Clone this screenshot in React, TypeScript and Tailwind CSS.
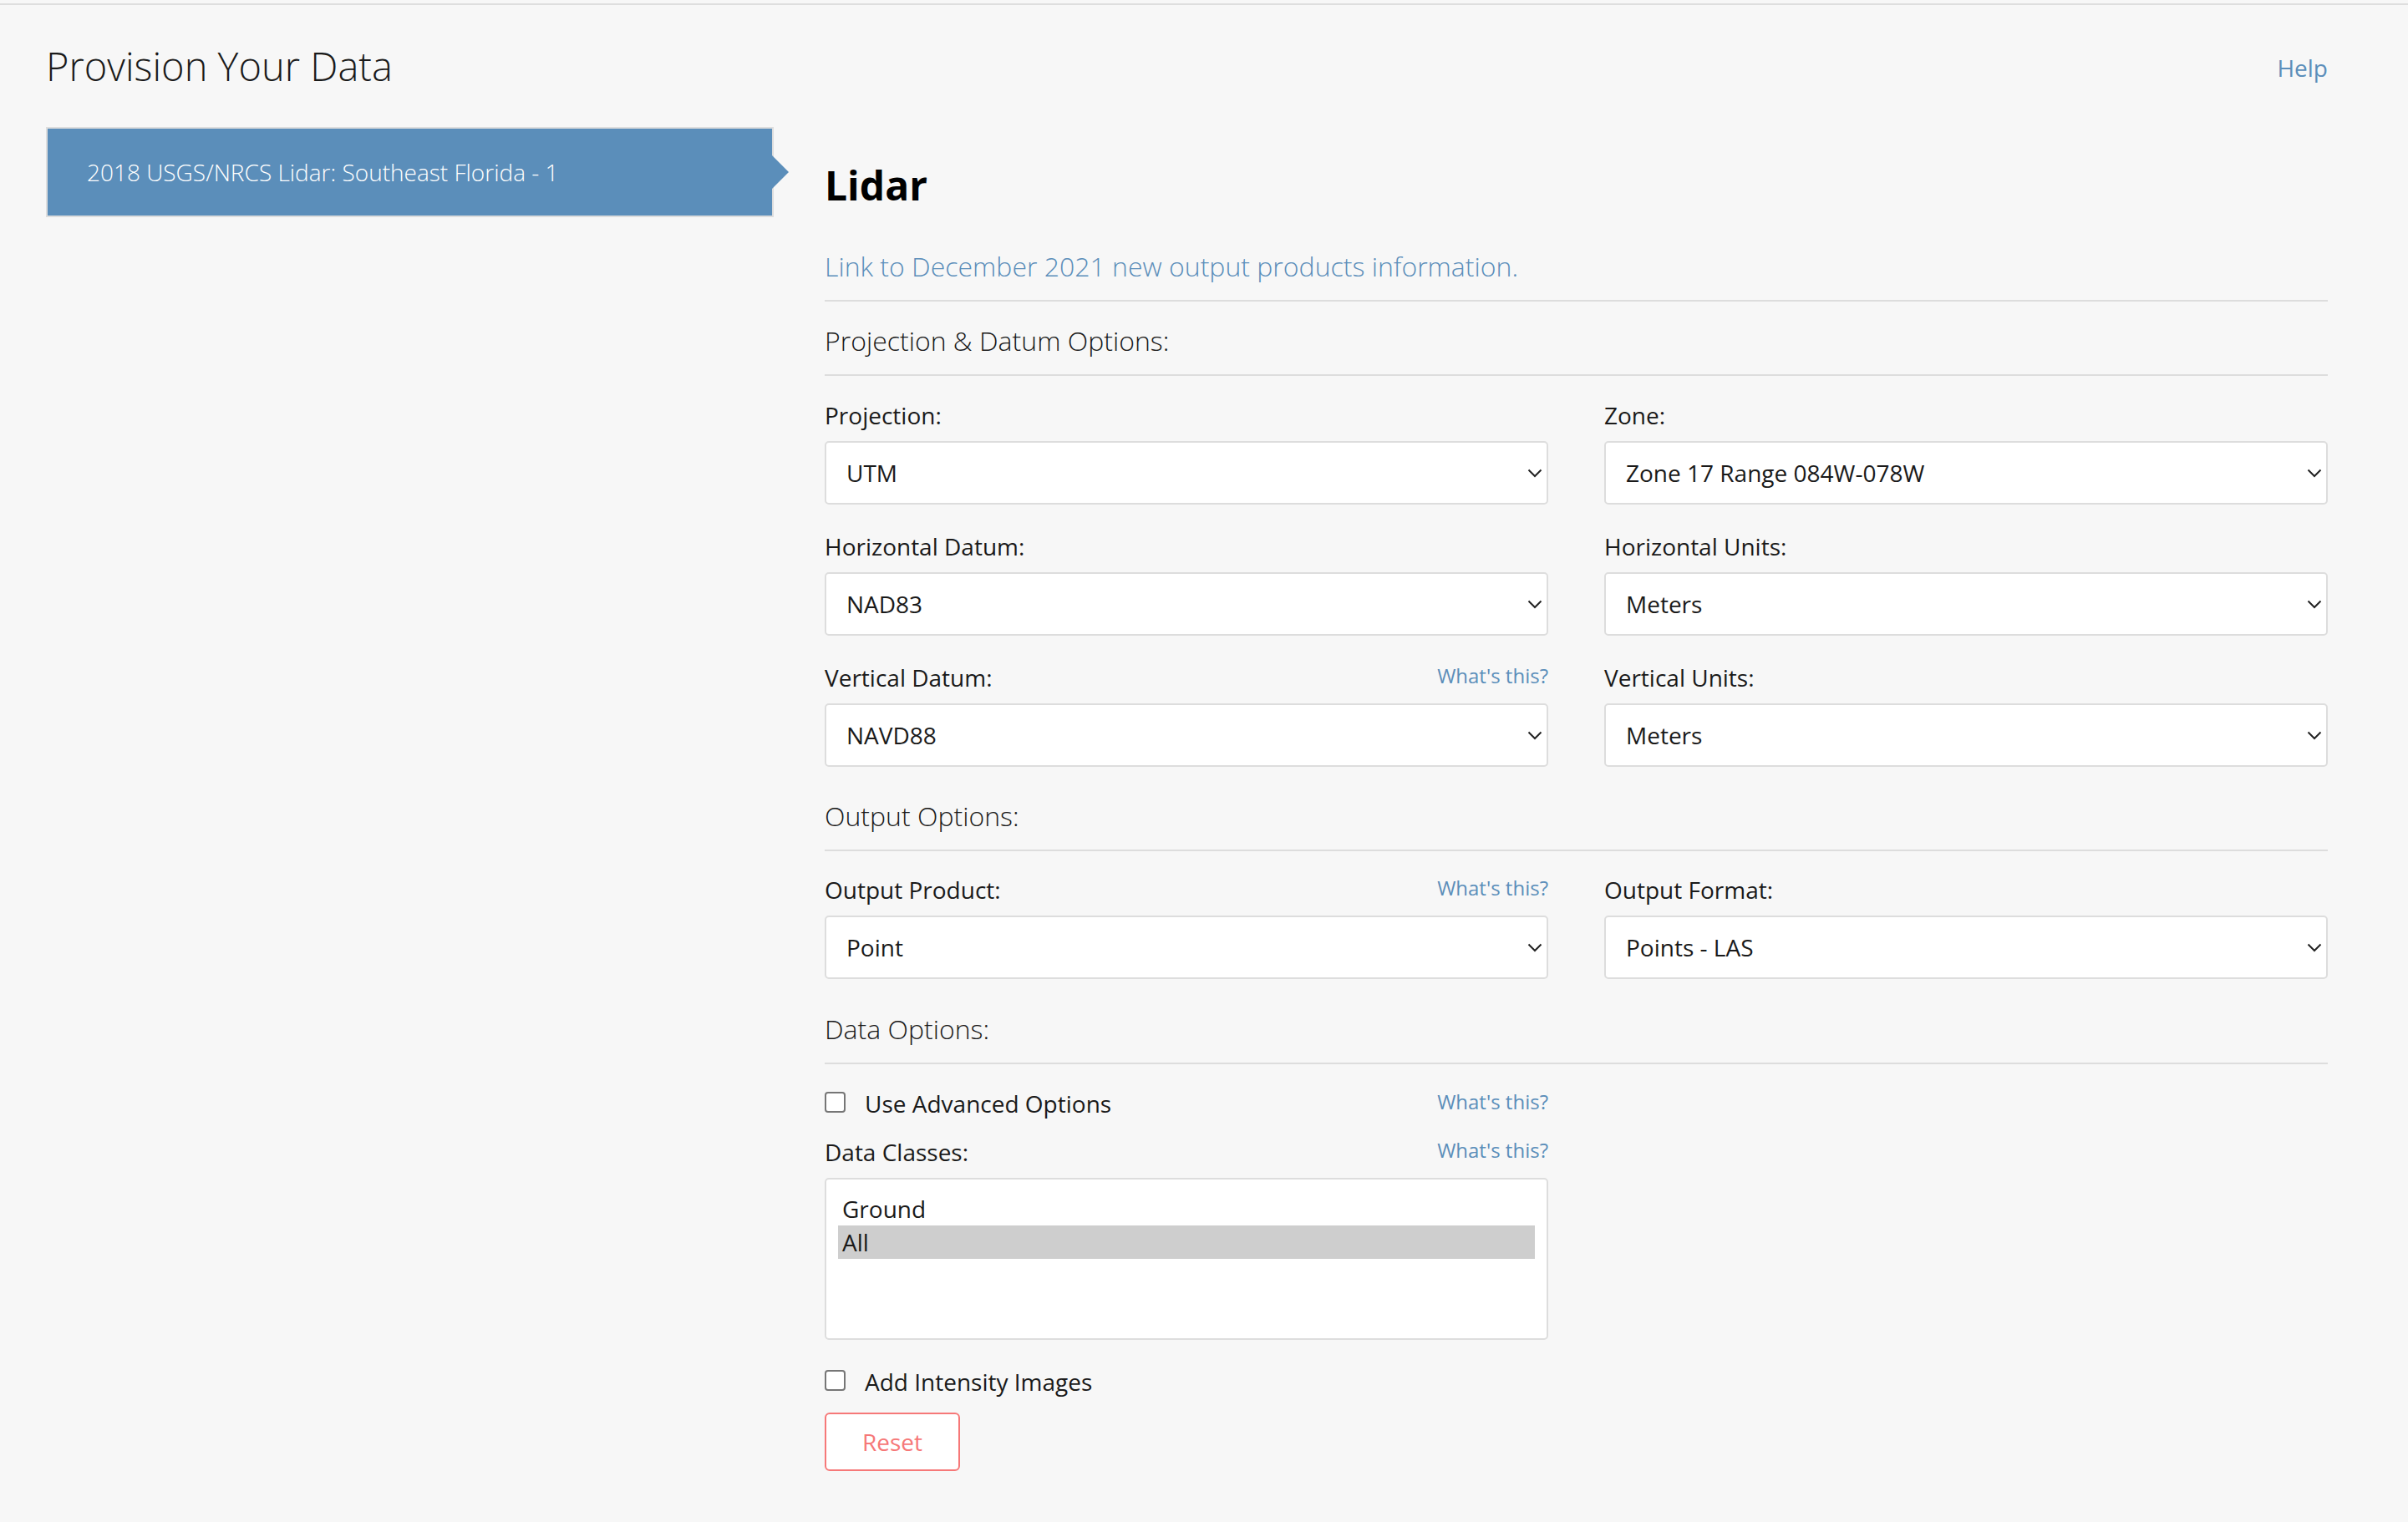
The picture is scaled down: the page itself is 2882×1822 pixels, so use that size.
import React from 'react';

const Chevron: React.FC = () => (
  <svg width="18" height="11" viewBox="0 0 18 11" className="shrink-0">
    <path d="M1.5 1.5 L9 9 L16.5 1.5" fill="none" stroke="#222" strokeWidth="2" />
  </svg>
);

const WhatsThis: React.FC = () => (
  <a className="text-[24px] leading-[24px] text-[#5b8eba]">What's this?</a>
);

type FieldProps = { label: string; value: string; help?: boolean };

const SelectField: React.FC<FieldProps> = ({ label, value, help }) => (
  <div className="flex flex-col">
    <div className="flex justify-between items-start h-[28px]">
      <span className="text-[28px] leading-[28px]">{label}</span>
      {help && <WhatsThis />}
    </div>
    <div className="mt-[17px] h-[76px] bg-white border-2 border-[#dddddd] rounded-[5px] flex items-center justify-between pl-[24px] pr-[5px]">
      <span className="text-[28px] leading-[28px]">{value}</span>
      <Chevron />
    </div>
  </div>
);

const SectionHeading: React.FC<{ title: string; top: string }> = ({ title, top }) => (
  <>
    <h3 className={`${top} text-[32px] leading-[32px] font-light`}>{title}</h3>
    <hr className="mt-[24px] border-0 border-t-2 border-[#dddddd]" />
  </>
);

const Checkbox: React.FC<{ label: string }> = ({ label }) => (
  <label className="flex items-start h-[28px]">
    <span className="w-[25px] h-[25px] border-2 border-[#767676] rounded-[4px] bg-white shrink-0" />
    <span className="ml-[23px] text-[28px] leading-[28px]">{label}</span>
  </label>
);

export default function App() {
  return (
    <div className="min-h-screen bg-[#f7f7f7] pt-[4px] font-['Open_Sans',sans-serif] text-[#1a1a1a]">
      <div className="border-t-2 border-[#dedede] pl-[55px] pr-[96px] pb-[36px]">
        {/* Header */}
        <div className="flex justify-between items-start pt-[50px]">
          <h1 className="text-[47px] leading-[47px] font-light">Provision Your Data</h1>
          <a className="mt-[11px] text-[28px] leading-[28px] text-[#5b8eba]">Help</a>
        </div>

        <div className="flex items-start mt-[49px]">
          {/* Sidebar */}
          <div className="w-[871px] shrink-0">
            <div className="relative h-[108px] bg-[#5b8eba] border-2 border-[#dddddd] pl-[47px] text-white text-[28px] leading-[104px] font-light">
              2018 USGS/NRCS Lidar: Southeast Florida - 1
              <span className="absolute right-[-20px] top-[32px] w-[20px] h-[40px] bg-[#5b8eba] [clip-path:polygon(0_0,100%_50%,0_100%)]" />
            </div>
          </div>

          {/* Main form */}
          <div className="flex-1 ml-[61px] pt-[46px]">
            <h2 className="text-[48px] leading-[48px] font-bold text-black">Lidar</h2>
            <a className="block mt-[57px] text-[32px] leading-[32px] font-light text-[#5b8eba]">
              Link to December 2021 new output products information.
            </a>
            <hr className="mt-[24px] border-0 border-t-2 border-[#dddddd]" />

            <SectionHeading title="Projection & Datum Options:" top="mt-[31px]" />
            <div className="mt-[33px] grid grid-cols-2 gap-x-[67px] gap-y-[36px]">
              <SelectField label="Projection:" value="UTM" />
              <SelectField label="Zone:" value="Zone 17 Range 084W-078W" />
              <SelectField label="Horizontal Datum:" value="NAD83" />
              <SelectField label="Horizontal Units:" value="Meters" />
              <SelectField label="Vertical Datum:" value="NAVD88" help />
              <SelectField label="Vertical Units:" value="Meters" />
            </div>

            <SectionHeading title="Output Options:" top="mt-[43px]" />
            <div className="mt-[32px] grid grid-cols-2 gap-x-[67px]">
              <SelectField label="Output Product:" value="Point" help />
              <SelectField label="Output Format:" value="Points - LAS" />
            </div>

            <SectionHeading title="Data Options:" top="mt-[44px]" />
            <div className="w-[866px]">
              <div className="mt-[33px] flex justify-between items-start">
                <Checkbox label="Use Advanced Options" />
                <WhatsThis />
              </div>
              <div className="mt-[30px] flex justify-between items-start h-[28px]">
                <span className="text-[28px] leading-[28px]">Data Classes:</span>
                <WhatsThis />
              </div>
              <div className="mt-[17px] h-[194px] bg-white border-2 border-[#dddddd] rounded-[5px] px-[14px] pt-[15px] text-[28px]">
                <div className="h-[40px] leading-[40px] pl-[5px]">Ground</div>
                <div className="h-[40px] leading-[40px] pl-[5px] bg-[#cecece]">All</div>
              </div>
              <div className="mt-[36px]">
                <Checkbox label="Add Intensity Images" />
              </div>
              <button className="mt-[23px] w-[162px] h-[70px] bg-white border-2 border-[#f67878] rounded-[6px] text-[28px] leading-[28px] text-[#f67878]">
                Reset
              </button>
            </div>
          </div>
        </div>
      </div>
    </div>
  );
}
